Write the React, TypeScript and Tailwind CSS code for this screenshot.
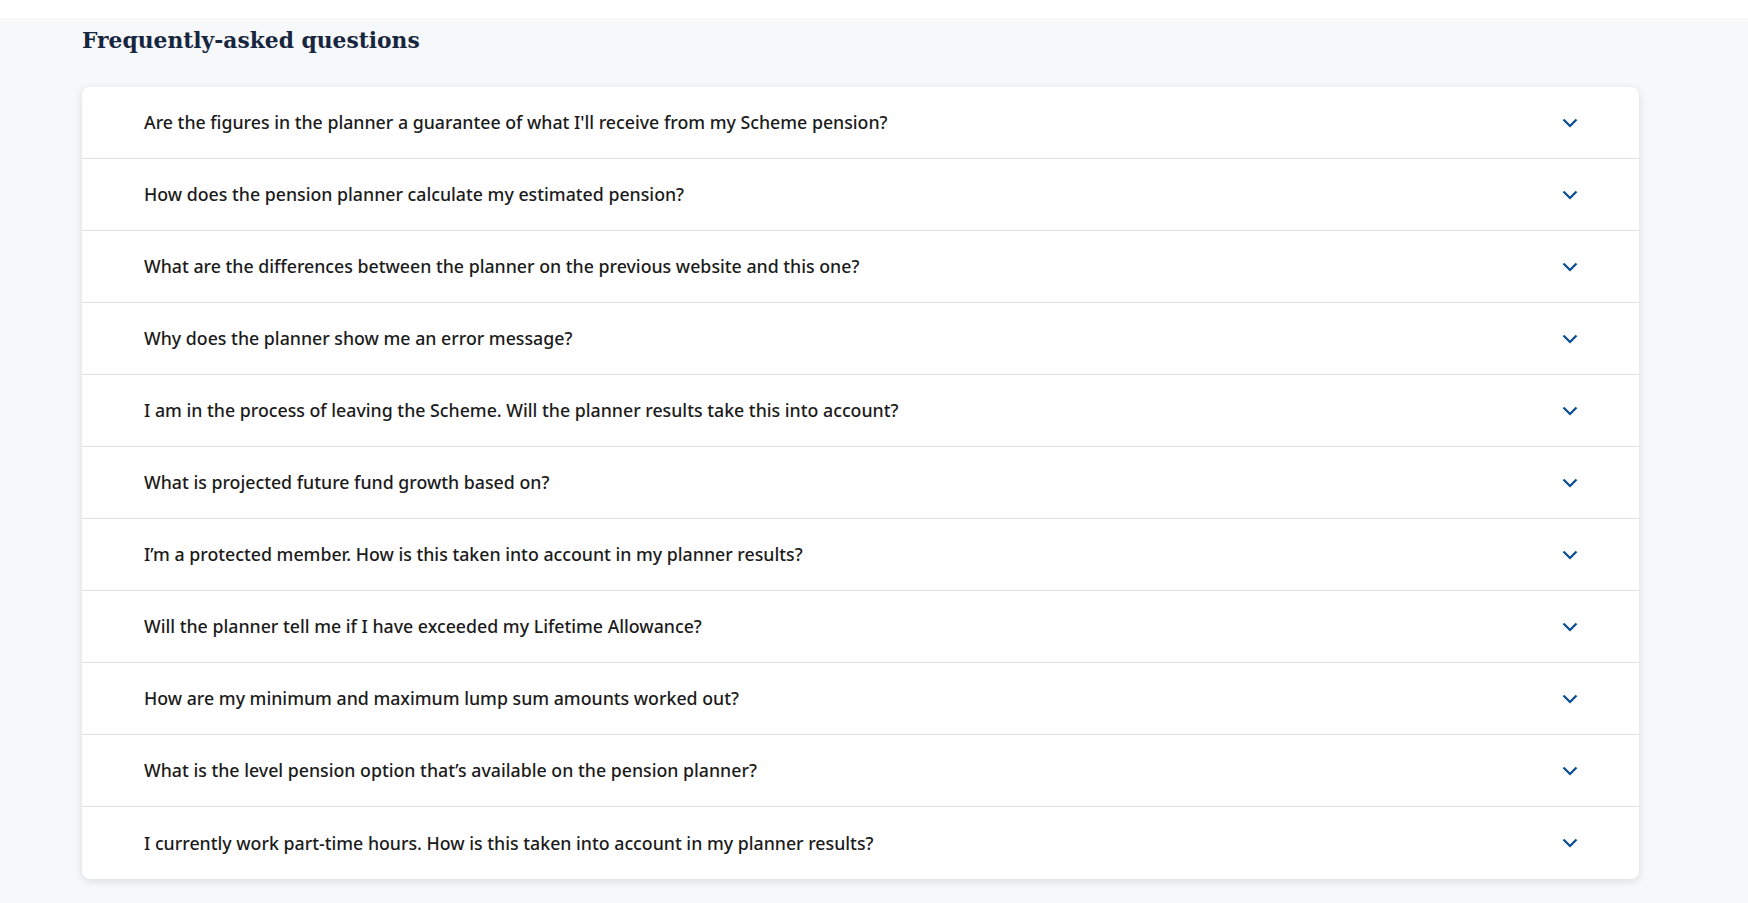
const questions = [
  "Are the figures in the planner a guarantee of what I'll receive from my Scheme pension?",
  "How does the pension planner calculate my estimated pension?",
  "What are the differences between the planner on the previous website and this one?",
  "Why does the planner show me an error message?",
  "I am in the process of leaving the Scheme. Will the planner results take this into account?",
  "What is projected future fund growth based on?",
  "I\u2019m a protected member. How is this taken into account in my planner results?",
  "Will the planner tell me if I have exceeded my Lifetime Allowance?",
  "How are my minimum and maximum lump sum amounts worked out?",
  "What is the level pension option that\u2019s available on the pension planner?",
  "I currently work part-time hours. How is this taken into account in my planner results?",
]

function Chevron() {
  return (
    <svg width="16" height="10" viewBox="0 0 16 10" fill="none" className="shrink-0">
      <path d="M1.5 1.5L8 8L14.5 1.5" stroke="#0b4a94" strokeWidth="2.2" />
    </svg>
  )
}

export default function App() {
  return (
    <div className="min-h-[903px] bg-white pt-[18px] font-['Noto_Sans',sans-serif]">
      <div className="min-h-[885px] bg-[#f7f8fa] px-[82px] pb-6">
        <h2 className="pt-[7px] font-['DejaVu_Serif',serif] text-[21.8px] font-bold leading-[32px] text-[#17263f]">
          Frequently-asked questions
        </h2>
        <div className="mt-[30px] w-[1557px] overflow-hidden rounded-lg bg-white shadow-[0_2px_8px_rgba(0,0,0,0.12)]">
          {questions.map((q, i) => (
            <button
              key={i}
              className={`flex h-[72px] w-full items-center justify-between pl-[62px] pr-[61px] text-left ${
                i < questions.length - 1 ? "border-b border-[#e1e1e1]" : ""
              }`}
            >
              <span className="text-[17.75px] font-medium text-[#1b1b1b]">{q}</span>
              <Chevron />
            </button>
          ))}
        </div>
      </div>
    </div>
  )
}
